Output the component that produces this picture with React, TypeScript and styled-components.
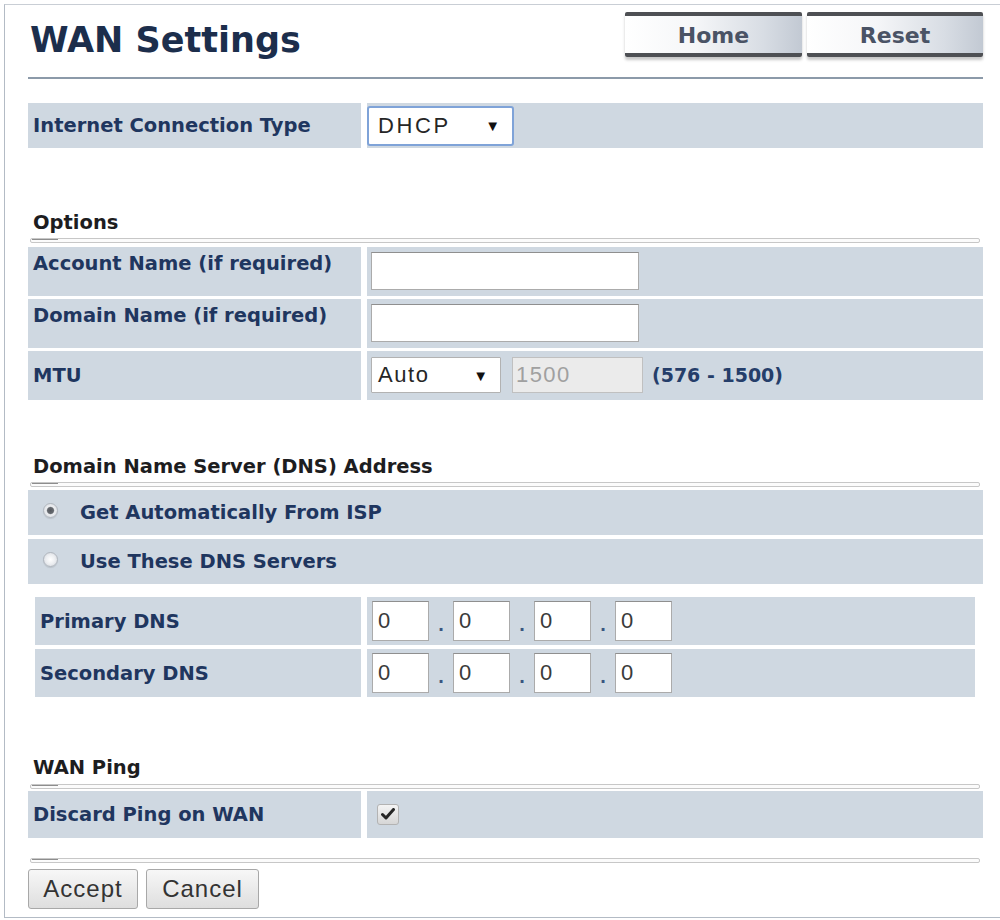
import React from 'react';
import styled, { createGlobalStyle } from 'styled-components';

const GlobalStyle = createGlobalStyle`
    html, body {
        margin: 0;
        padding: 0;
        background: #fff;
    }
    body {
        font-family: "Liberation Sans", Arial, sans-serif;
    }
`;

const Frame = styled.div`
    margin: 4px 0 0 4px;
    height: 914px;
    box-sizing: border-box;
    border-left: 1px solid #b3bbc5;
    border-top: 1px solid #c9ced5;
    border-bottom: 1px solid #b3bbc5;
    padding: 0 17px 0 23px;
`;

const Header = styled.header`
    display: flex;
    justify-content: space-between;
    align-items: flex-start;
    height: 72px;
    border-bottom: 2px solid #8c9aa9;
`;

const Title = styled.h1`
    margin: 18px 0 0 2px;
    font: bold 35px/1 "DejaVu Sans", Verdana, sans-serif;
    color: #1c2e4c;
`;

const NavGroup = styled.nav`
    display: flex;
    gap: 5px;
    margin-top: 7px;
`;

const NavButton = styled.button<{ $w: number }>`
    width: ${p => p.$w}px;
    height: 45px;
    box-sizing: border-box;
    padding: 0;
    border: none;
    border-top: 4px solid #4e5054;
    border-bottom: 4px solid #4e5054;
    border-radius: 2px;
    background: linear-gradient(90deg, #ffffff 0%, #f5f6f8 40%, #d8dde4 78%, #c2c9d3 100%);
    box-shadow: 0 3px 3px rgba(0, 0, 0, 0.22);
    font: bold 22px "DejaVu Sans", Verdana, sans-serif;
    color: #4a5365;
    padding-top: 2px;
    cursor: pointer;
`;

const SectionTitle = styled.div<{ $top: number }>`
    margin-top: ${p => p.$top}px;
    padding-left: 5px;
    font: bold 19.5px/1 "DejaVu Sans", Verdana, sans-serif;
    color: #1d1d1f;
`;

const Rule = styled.div<{ $top: number; $bottom: number }>`
    position: relative;
    margin: ${p => p.$top}px 3px ${p => p.$bottom}px 2px;
    height: 3px;
    border: 1px solid #c7c7c7;
    border-radius: 2px;
    background: #fbfbfb;
    &::before {
        content: "";
        position: absolute;
        left: 1px;
        top: 0;
        width: 26px;
        height: 1px;
        background: #8d8d8d;
    }
`;

const RowGroup = styled.div<{ $top?: number; $inset?: boolean; $gap?: number }>`
    display: flex;
    flex-direction: column;
    gap: ${p => p.$gap ?? 3}px;
    margin: ${p => p.$top || 0}px ${p => (p.$inset ? '8px' : '0')} 0 ${p => (p.$inset ? '7px' : '0')};
`;

const Row = styled.div<{ $h: number; $label: number }>`
    display: grid;
    grid-template-columns: ${p => p.$label}px 1fr;
    column-gap: 6px;
    height: ${p => p.$h}px;
`;

const LabelCell = styled.div<{ $raise?: boolean }>`
    display: flex;
    align-items: center;
    padding: 0 0 ${p => (p.$raise ? '16px' : '0')} 5px;
    background: #cfd8e1;
    font: bold 19.5px "DejaVu Sans", Verdana, sans-serif;
    color: #1f365f;
    white-space: nowrap;
`;

const ValueCell = styled.div<{ $pad?: number }>`
    display: flex;
    align-items: center;
    padding-left: ${p => p.$pad ?? 4}px;
    background: #cfd8e1;
`;

const SelectBox = styled.div<{ $w: number; $h: number; $focus?: boolean; $padL: number; $padR: number; $ls: number }>`
    width: ${p => p.$w}px;
    height: ${p => p.$h}px;
    box-sizing: border-box;
    display: flex;
    align-items: center;
    justify-content: space-between;
    padding: 0 ${p => p.$padR}px 0 ${p => p.$padL}px;
    background: #fff;
    border: ${p => (p.$focus ? '2px solid #7fa3d8' : '1px solid #b2b2b2')};
    border-radius: ${p => (p.$focus ? '3px' : '1px')};
    font-size: 22px;
    letter-spacing: ${p => p.$ls}px;
    color: #262626;
`;

const Arrow = styled.span`
    font-size: 15px;
    letter-spacing: 0;
    color: #111;
`;

const TextField = styled.input<{ $w: number; $h: number }>`
    width: ${p => p.$w}px;
    height: ${p => p.$h}px;
    box-sizing: border-box;
    margin: 0;
    padding: 0 0 0 5px;
    border: 1px solid #ababab;
    border-top-color: #8f8f8f;
    background: #fff;
    font: 22px "Liberation Sans", Arial, sans-serif;
    letter-spacing: 1.4px;
    color: #3a3a3a;
    outline: none;
    &:disabled {
        background: #ebebeb;
        border-color: #c0c0c0;
        color: #a0a0a0;
        padding-left: 3px;
    }
`;

const Hint = styled.span`
    margin-left: 9px;
    font: bold 19px "DejaVu Sans", Verdana, sans-serif;
    color: #253e6a;
`;

const Dot = styled.span`
    width: 24px;
    text-align: center;
    font: bold 20px "Liberation Sans", Arial, sans-serif;
    color: #3a5580;
    padding-top: 6px;
`;

const RadioRow = styled.div`
    display: flex;
    align-items: center;
    gap: 22px;
    height: 45px;
    padding-left: 15px;
    background: #cfd8e1;
    font: bold 19.5px "DejaVu Sans", Verdana, sans-serif;
    color: #1f365f;
`;

const Radio = styled.span<{ $on?: boolean }>`
    width: 15px;
    height: 15px;
    box-sizing: border-box;
    border-radius: 50%;
    border: 1px solid #b0b6be;
    background: ${p =>
        p.$on
            ? 'radial-gradient(circle, #55585d 0, #666a70 3px, #eceef1 4.2px, #d2d6db 100%)'
            : 'radial-gradient(circle, #ffffff 0, #eceef1 50%, #cfd3d9 100%)'};
    box-shadow: 0 1px 1px rgba(0, 0, 0, 0.1);
    margin-top: -4px;
`;

const CheckBox = styled.span`
    width: 22px;
    height: 21px;
    box-sizing: border-box;
    margin-left: 6px;
    display: flex;
    align-items: center;
    justify-content: center;
    border: 1px solid #b3b3b3;
    border-radius: 3px;
    background: linear-gradient(#f4f4f4, #d6d6d6);
`;

const Footer = styled.div`
    display: flex;
    gap: 8px;
`;

const FormButton = styled.button<{ $w: number }>`
    width: ${p => p.$w}px;
    height: 40px;
    padding: 0;
    border: 1px solid #a8a8a8;
    border-radius: 3px;
    background: linear-gradient(#f7f7f7, #dedede);
    font: 24px "Liberation Sans", Arial, sans-serif;
    letter-spacing: 1px;
    color: #333;
    cursor: pointer;
`;

const CheckMark: React.FC = () => (
    <svg width="14" height="12" viewBox="0 0 14 12">
        <path d="M1.5 6.5 L5 10 L12.5 1.5" fill="none" stroke="#262626" strokeWidth="3" strokeLinecap="round" strokeLinejoin="round" />
    </svg>
);

const IpField: React.FC = () => (
    <>
        <TextField $w={57} $h={40} defaultValue="0" />
        <Dot>.</Dot>
        <TextField $w={57} $h={40} defaultValue="0" />
        <Dot>.</Dot>
        <TextField $w={57} $h={40} defaultValue="0" />
        <Dot>.</Dot>
        <TextField $w={57} $h={40} defaultValue="0" />
    </>
);

const App: React.FC = () => {
    return (
        <>
            <GlobalStyle />
            <Frame>
                <Header>
                    <Title>WAN Settings</Title>
                    <NavGroup>
                        <NavButton $w={177}>Home</NavButton>
                        <NavButton $w={176}>Reset</NavButton>
                    </NavGroup>
                </Header>

                <RowGroup $top={24}>
                    <Row $h={45} $label={333}>
                        <LabelCell>Internet Connection Type</LabelCell>
                        <ValueCell $pad={0}>
                            <SelectBox $w={147} $h={40} $focus $padL={9} $padR={12} $ls={2.6}>
                                DHCP <Arrow>▼</Arrow>
                            </SelectBox>
                        </ValueCell>
                    </Row>
                </RowGroup>

                <SectionTitle $top={65}>Options</SectionTitle>
                <Rule $top={5} $bottom={4} />
                <RowGroup>
                    <Row $h={49} $label={333}>
                        <LabelCell $raise>Account Name (if required)</LabelCell>
                        <ValueCell>
                            <TextField $w={268} $h={38} />
                        </ValueCell>
                    </Row>
                    <Row $h={49} $label={333}>
                        <LabelCell $raise>Domain Name (if required)</LabelCell>
                        <ValueCell>
                            <TextField $w={268} $h={38} />
                        </ValueCell>
                    </Row>
                    <Row $h={49} $label={333}>
                        <LabelCell>MTU</LabelCell>
                        <ValueCell>
                            <SelectBox $w={130} $h={36} $padL={6} $padR={12} $ls={1.6}>
                                Auto <Arrow>▼</Arrow>
                            </SelectBox>
                            <TextField $w={131} $h={36} defaultValue="1500" disabled style={{ marginLeft: 11 }} />
                            <Hint>(576 - 1500)</Hint>
                        </ValueCell>
                    </Row>
                </RowGroup>

                <SectionTitle $top={57}>Domain Name Server (DNS) Address</SectionTitle>
                <Rule $top={6} $bottom={3} />
                <RowGroup $gap={4}>
                    <RadioRow>
                        <Radio $on />
                        Get Automatically From ISP
                    </RadioRow>
                    <RadioRow>
                        <Radio />
                        Use These DNS Servers
                    </RadioRow>
                </RowGroup>
                <RowGroup $top={13} $inset $gap={4}>
                    <Row $h={48} $label={326}>
                        <LabelCell>Primary DNS</LabelCell>
                        <ValueCell $pad={5}>
                            <IpField />
                        </ValueCell>
                    </Row>
                    <Row $h={48} $label={326}>
                        <LabelCell>Secondary DNS</LabelCell>
                        <ValueCell $pad={5}>
                            <IpField />
                        </ValueCell>
                    </Row>
                </RowGroup>

                <SectionTitle $top={61}>WAN Ping</SectionTitle>
                <Rule $top={6} $bottom={2} />
                <RowGroup>
                    <Row $h={47} $label={333}>
                        <LabelCell>Discard Ping on WAN</LabelCell>
                        <ValueCell>
                            <CheckBox>
                                <CheckMark />
                            </CheckBox>
                        </ValueCell>
                    </Row>
                </RowGroup>

                <Rule $top={20} $bottom={6} />
                <Footer>
                    <FormButton $w={110}>Accept</FormButton>
                    <FormButton $w={113}>Cancel</FormButton>
                </Footer>
            </Frame>
        </>
    );
};

export default App;
